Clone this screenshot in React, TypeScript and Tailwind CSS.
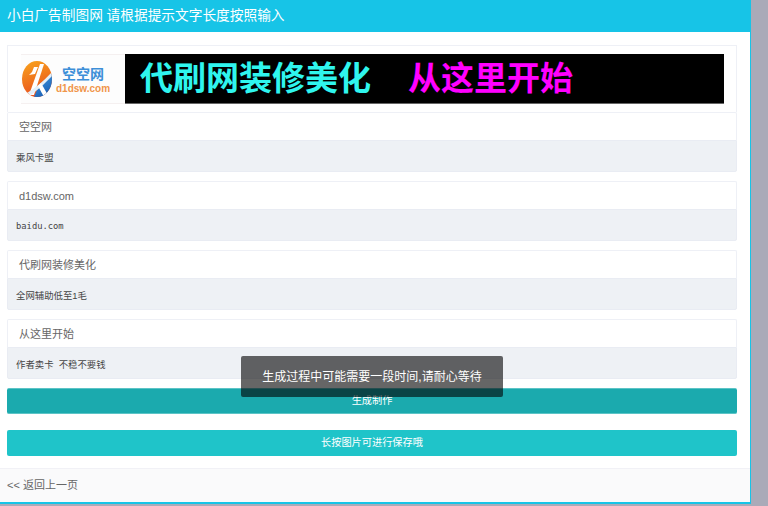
import React from 'react';

const cjk = "font-['Liberation_Sans','Noto_Sans_CJK_SC',sans-serif]";

function Field({ title, value, mono }: { title: string; value: string; mono?: boolean }) {
  return (
    <div>
      <div className="h-[28px] pl-[11px] pt-[1px] flex items-center text-[11px] text-[#666] bg-white border border-b-0 border-[#eef0f6] rounded-t-[2px]">
        {title}
      </div>
      <input
        readOnly
        value={value}
        className={`block w-full h-[32px] pl-[8px] pt-[2px] bg-[#eef1f5] border border-[#e9ecf3] rounded-b-[2px] text-[#444] outline-none ${
          mono ? "text-[8.8px] font-['DejaVu_Sans_Mono',monospace]" : 'text-[9.4px]'
        }`}
      />
    </div>
  );
}

function Logo() {
  return (
    <div className="w-[104px] h-[50px] flex items-center bg-[#fdfdfd] border-y border-[#f5f0f0]">
      <svg width="30" height="36" viewBox="0 0 30 36" className="ml-[1px] shrink-0">
        <defs>
          <clipPath id="logoOval">
            <ellipse cx="15" cy="18" rx="15" ry="18" />
          </clipPath>
          <linearGradient id="logoLeft" x1="0" y1="0" x2="0.3" y2="1">
            <stop offset="0" stopColor="#f9a51c" />
            <stop offset="1" stopColor="#e9531f" />
          </linearGradient>
          <linearGradient id="logoRight" x1="0" y1="0" x2="0.5" y2="1">
            <stop offset="0" stopColor="#4a9fe2" />
            <stop offset="1" stopColor="#1a62b8" />
          </linearGradient>
        </defs>
        <g clipPath="url(#logoOval)">
          <rect width="30" height="36" fill="url(#logoLeft)" />
          <path d="M30 13 V36 H12 L17 24 Z" fill="url(#logoRight)" />
          <path d="M18 3 L7 34 H12 L22 3 Z" fill="#fff" />
          <path d="M12 6 L10 11 L7 14 L13 13 L16 6 Z" fill="#fff" />
          <path d="M5 32 Q17 25 30 11 L30 15 Q20 26 9 34 Z" fill="#e4f0fa" />
          <path d="M16 25 L22 36 H27 L19 22 Z" fill="#fff" />
        </g>
      </svg>
      <div className="ml-[4px] flex flex-col items-center leading-none">
        <span className="mt-[1px] text-[14px] font-bold text-[#3d8fd8] leading-[18px]">空空网</span>
        <span className="text-[10px] font-bold text-[#f0954a] leading-[12px]">d1dsw.com</span>
      </div>
    </div>
  );
}

export default function App() {
  return (
    <div className={`h-[506px] overflow-hidden bg-[#aaaab8] ${cjk}`}>
      <div className="relative w-[751px] h-[504px] flex flex-col bg-white border-r border-b-2 border-[#17c4e7]">
        <div className="h-[32px] shrink-0 pl-[7px] flex items-center bg-[#17c4e7] text-white text-[13.7px]">
          小白广告制图网 请根据提示文字长度按照输入
        </div>

        <div className="flex-1 pl-[7px] pr-[13px] pt-[13px]">
          <div className="h-[67px] pl-[13px] flex items-center bg-white border border-b-0 border-[#eef0f6]">
            <Logo />
            <div className="w-[599px] h-[50px] flex items-center bg-black border-b border-[#666] font-bold">
              <span className="ml-[15px] text-[33px] leading-none text-[#2ff5ee]">代刷网装修美化</span>
              <span className="ml-[37px] text-[33px] leading-none text-[#ff00ff]">从这里开始</span>
            </div>
          </div>

          <Field title="空空网" value="乘风卡盟" />
          <div className="mt-[9px]"><Field title="d1dsw.com" value="baidu.com" mono /></div>
          <div className="mt-[9px]"><Field title="代刷网装修美化" value="全网辅助低至1毛" /></div>
          <div className="mt-[9px]"><Field title="从这里开始" value="作者卖卡  不稳不要钱" /></div>

          <button className="block w-full h-[26px] mt-[9px] bg-[#1baaae] border-t border-b border-[#5cc4c6] rounded-[2px] text-white text-[10.2px]">
            生成制作
          </button>
          <button className="block w-full h-[26px] mt-[16px] bg-[#1fc4c9] rounded-[2px] text-white text-[10.2px]">
            长按图片可进行保存哦
          </button>
        </div>

        <div className="h-[34px] shrink-0 pl-[7px] flex items-center bg-[#fafafb] border-t border-[#f1f1f6] text-[11px] text-[#666]">
          {'<< 返回上一页'}
        </div>

        {/* toast */}
        <div className="absolute left-[241px] top-[356px] w-[262px] h-[41px] flex items-center justify-center rounded-[2px] bg-black/60 text-white text-[12px]">
          生成过程中可能需要一段时间,请耐心等待
        </div>
      </div>
    </div>
  );
}
